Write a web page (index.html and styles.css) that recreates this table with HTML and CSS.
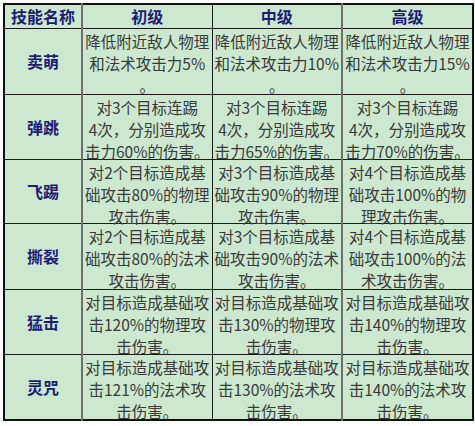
FILE: index.html
```html
<!DOCTYPE html>
<html lang="zh-CN">
<head>
<meta charset="utf-8">
<title>技能表</title>
<link rel="stylesheet" href="styles.css">
</head>
<body>
<div class="wrap">
<table class="skills">
  <colgroup>
    <col class="c1"><col class="c2"><col class="c3"><col class="c4">
  </colgroup>
  <thead>
    <tr class="head">
      <th class="name">技能名称</th>
      <th class="lv l2">初级</th>
      <th class="lv l3">中级</th>
      <th class="lv l4">高级</th>
    </tr>
  </thead>
  <tbody>
    <tr class="r66">
      <th class="name">卖萌</th>
      <td class="l2"><div class="t">降低附近敌人物理<br>和法术攻击力5%<br>。</div></td>
      <td class="l3"><div class="t">降低附近敌人物理<br>和法术攻击力10%<br>。</div></td>
      <td class="l4"><div class="t">降低附近敌人物理<br>和法术攻击力15%<br>。</div></td>
    </tr>
    <tr class="r65">
      <th class="name">弹跳</th>
      <td class="l2"><div class="t">对3个目标连踢<br>4次，分别造成攻<br>击力60%的伤害。</div></td>
      <td class="l3"><div class="t">对3个目标连踢<br>4次，分别造成攻<br>击力65%的伤害。</div></td>
      <td class="l4"><div class="t">对3个目标连踢<br>4次，分别造成攻<br>击力70%的伤害。</div></td>
    </tr>
    <tr class="r64">
      <th class="name">飞踢</th>
      <td class="l2"><div class="t">对2个目标造成基<br>础攻击80%的物理<br>攻击伤害。</div></td>
      <td class="l3"><div class="t">对3个目标造成基<br>础攻击90%的物理<br>攻击伤害。</div></td>
      <td class="l4"><div class="t">对4个目标造成基<br>础攻击100%的物<br>理攻击伤害。</div></td>
    </tr>
    <tr class="r66">
      <th class="name">撕裂</th>
      <td class="l2"><div class="t">对2个目标造成基<br>础攻击80%的法术<br>攻击伤害。</div></td>
      <td class="l3"><div class="t">对3个目标造成基<br>础攻击90%的法术<br>攻击伤害。</div></td>
      <td class="l4"><div class="t">对4个目标造成基<br>础攻击100%的法<br>术攻击伤害。</div></td>
    </tr>
    <tr class="r65">
      <th class="name">猛击</th>
      <td class="l2"><div class="t">对目标造成基础攻<br>击120%的物理攻<br>击伤害。</div></td>
      <td class="l3"><div class="t">对目标造成基础攻<br>击130%的物理攻<br>击伤害。</div></td>
      <td class="l4"><div class="t">对目标造成基础攻<br>击140%的物理攻<br>击伤害。</div></td>
    </tr>
    <tr class="r66">
      <th class="name">灵咒</th>
      <td class="l2"><div class="t">对目标造成基础攻<br>击121%的法术攻<br>击伤害。</div></td>
      <td class="l3"><div class="t">对目标造成基础攻<br>击130%的法术攻<br>击伤害。</div></td>
      <td class="l4"><div class="t">对目标造成基础攻<br>击140%的法术攻<br>击伤害。</div></td>
    </tr>
  </tbody>
</table>
</div>
</body>
</html>
```

FILE: styles.css
```css
html, body {
  margin: 0;
  padding: 0;
  background: #ffffff;
}

.wrap {
  padding: 3px 0 0 3px;
}

.skills {
  border-collapse: collapse;
  table-layout: fixed;
  width: 469px;
  background: #cce8cf;
  border: 2px solid #111111;
  font-family: "Noto Sans CJK SC", "Noto Sans", sans-serif;
}

.c1 { width: 78px; }
.c2 { width: 130px; }
.c3 { width: 130px; }
.c4 { width: 131px; }

.skills th,
.skills td {
  padding: 0;
  border-top: 1px solid #1a1a1a;
  border-bottom: 1px solid #1a1a1a;
}

.skills .l2 {
  border-left: 2px solid #6f6f6f;
  border-right: 1px solid #1a1a1a;
}

.skills .l4 {
  border-left: 2px solid #6f6f6f;
}

.head {
  height: 24px;
}

.head th {
  font-size: 16px;
  font-weight: bold;
  color: #1c1c78;
  line-height: 22px;
  text-align: center;
  vertical-align: middle;
}

.name {
  font-size: 16px;
  font-weight: bold;
  color: #1c1c78;
  text-align: center;
  vertical-align: middle;
}

.r66 { height: 66px; }
.r65 { height: 65px; }
.r64 { height: 64px; }

.skills td {
  vertical-align: top;
  text-align: center;
  color: #3a3a3a;
  font-size: 15.5px;
}

.t {
  height: 60px;
  padding-top: 1px;
  line-height: 22px;
  white-space: nowrap;
  overflow: visible;
}
```
